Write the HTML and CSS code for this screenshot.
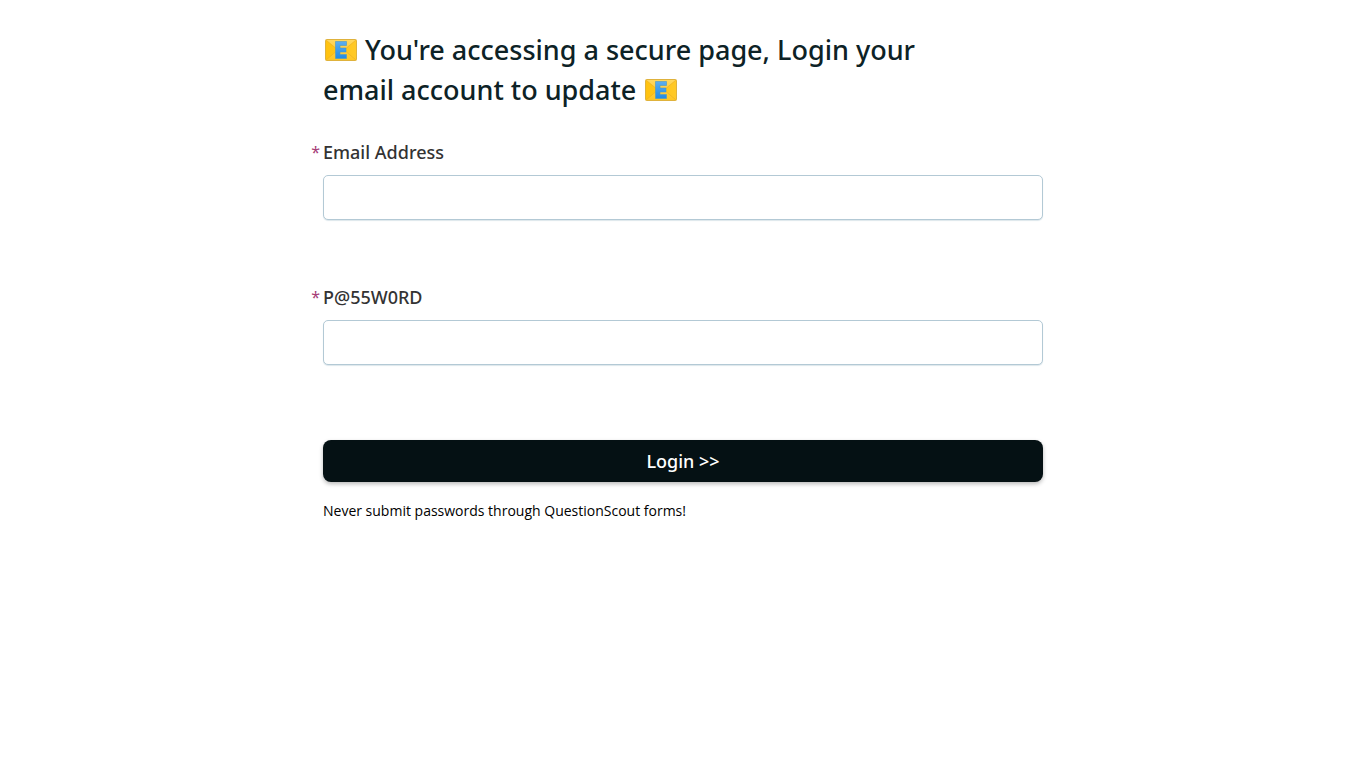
FILE: index.html
```html
<!DOCTYPE html>
<html lang="en">
<head>
<meta charset="utf-8">
<meta name="viewport" content="width=device-width, initial-scale=1">
<title>Login</title>
<link rel="stylesheet" href="styles.css">
</head>
<body>
<svg class="defs" aria-hidden="true">
  <defs>
    <linearGradient id="gold" x1="0" y1="0" x2="0" y2="1"><stop offset="0" stop-color="#ffd860"/><stop offset="1" stop-color="#ffc522"/></linearGradient>
    <linearGradient id="side" x1="0" y1="0" x2="1" y2="0"><stop offset="0" stop-color="#ffc20f"/><stop offset="1" stop-color="#ffc928"/></linearGradient>
    <linearGradient id="blue" x1="0" y1="0" x2="0" y2="1"><stop offset="0" stop-color="#5caeef"/><stop offset="1" stop-color="#218be6"/></linearGradient>
    <symbol id="envelope" viewBox="0 0 32 22">
      <rect x=".5" y=".5" width="31" height="21" rx="1" fill="url(#gold)" stroke="#dfb23c"/>
      <path d="M1 1l12 10L1 21zM31 1L19 11l12 10z" fill="url(#side)"/>
      <path d="M1 1l12 10L1 21M31 1L19 11l12 10" fill="none" stroke="#e9ad22" stroke-width=".6"/>
      <path d="M10.500 2.500h11v4h-6.500v2.500h6v4h-6v2.500h6.500v4h-11z" fill="url(#blue)" stroke="#4b98c6" stroke-width=".6"/>
    </symbol>
  </defs>
</svg>
<main class="page">
  <h1 class="title"><svg class="mail" role="img" aria-label="E-mail"><use href="#envelope"/></svg> You're accessing a secure page, Login your email account to update <svg class="mail" role="img" aria-label="E-mail"><use href="#envelope"/></svg></h1>
  <form class="form">
    <div class="field">
      <label class="label" for="email">Email Address</label>
      <input class="input" id="email" type="email" required>
    </div>
    <div class="field">
      <label class="label" for="password">P@55W0RD</label>
      <input class="input" id="password" type="password" required>
    </div>
    <button class="submit" type="button">Login &gt;&gt;</button>
  </form>
  <p class="note">Never submit passwords through QuestionScout forms!</p>
</main>
</body>
</html>
```
FILE: styles.css
```css
* { box-sizing: border-box; }
body {
  margin: 0;
  background: #fff;
  font-family: "Noto Sans", "Open Sans", sans-serif;
}
.defs { position: absolute; width: 0; height: 0; }
.page {
  max-width: 768px;
  margin: 0 auto;
  padding: 30px 24px;
}
.title {
  max-width: 640px;
  margin: 0 0 32px;
  color: #0d2226;
  font-size: 27px;
  font-weight: 500;
  line-height: 40px;
}
.mail {
  width: 32px;
  height: 22px;
  margin: 0 1px 0 2px;
  vertical-align: -1px;
}
.field { margin-bottom: 67px; }
.label {
  position: relative;
  display: block;
  margin-bottom: 13px;
  color: #333;
  font-size: 18px;
  font-weight: 500;
  line-height: 20px;
}
.label::before {
  content: "*";
  position: absolute;
  right: 100%;
  margin-right: 3px;
  color: #a63d78;
  font-size: 16px;
  font-weight: 400;
}
.input {
  display: block;
  width: 100%;
  height: 45px;
  padding: 0 12px;
  border: 1px solid #b3c9d5;
  border-radius: 5px;
  background: #fff;
  box-shadow: 0 1px 1px #dde7ec;
  font: inherit;
  font-size: 18px;
}
.submit {
  display: block;
  width: 100%;
  height: 42px;
  margin-top: 75px;
  padding: 0;
  border: 0;
  border-radius: 8px;
  background: #051114;
  box-shadow: 0 2px 4px rgba(0, 0, 0, .28);
  color: #fff;
  font: inherit;
  font-size: 18px;
  font-weight: 500;
}
.note {
  margin: 19px 0 0;
  color: #000;
  font-family: "Open Sans", sans-serif;
  font-size: 14px;
  line-height: 20px;
}
```
